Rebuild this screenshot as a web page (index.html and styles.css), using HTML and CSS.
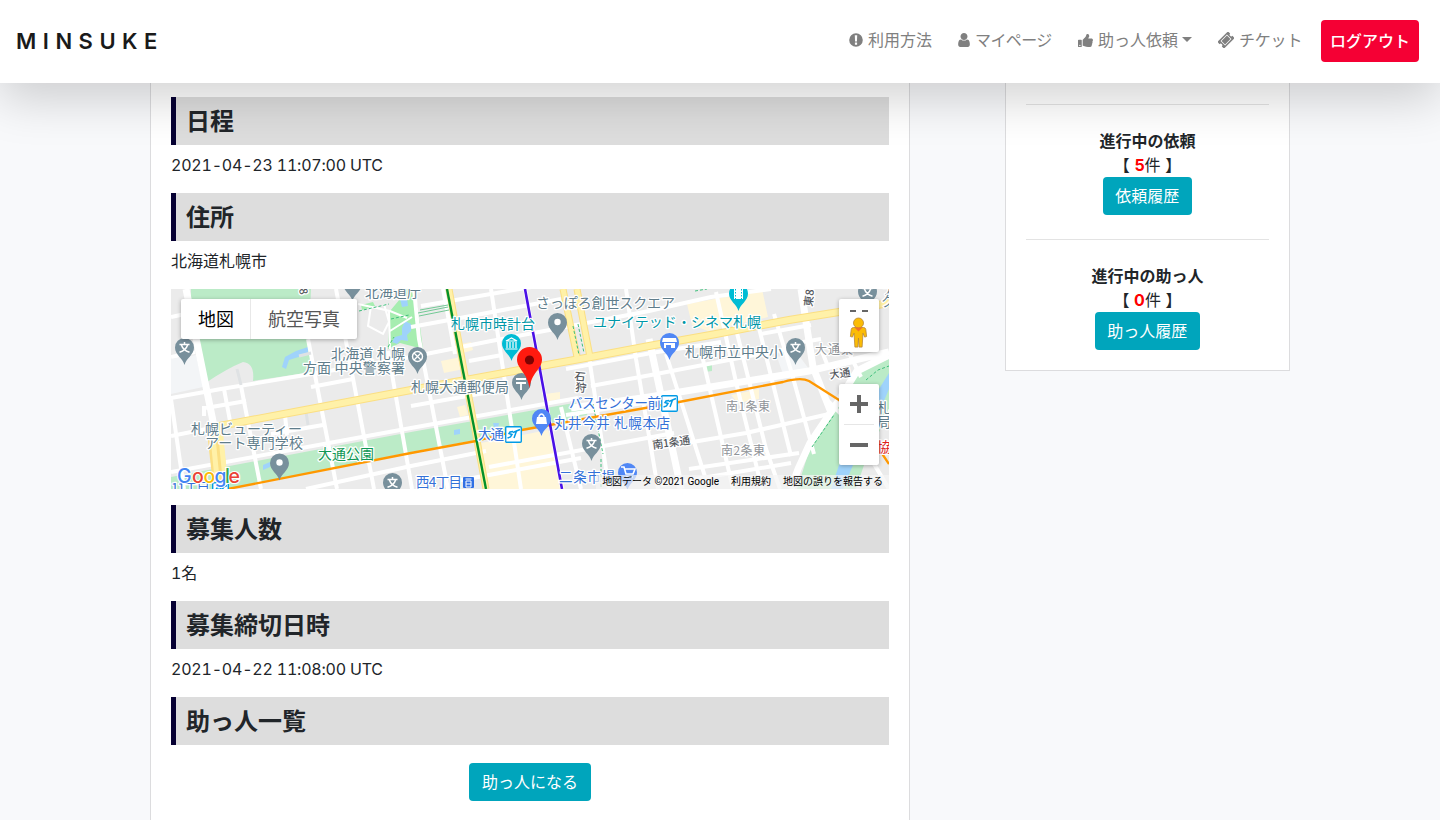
FILE: index.html
```html
<!DOCTYPE html>
<html lang="ja">
<head>
<meta charset="utf-8">
<title>MINSUKE</title>
<link rel="stylesheet" href="styles.css">
</head>
<body>
<header class="navbar">
  <a class="brand">MINSUKE</a>
  <nav class="nav">
    <a class="nav-item"><svg class="i-alert" viewBox="0 0 14 14"><path fill-rule="evenodd" d="M7 .2a6.8 6.8 0 1 0 0 13.600A6.800 6.800 0 0 0 7 .2zM5.800 2.200h2.400l-.25 6.200h-1.900zM5.900 9.600h2.200v2.100H5.900z"/></svg><span class="w64">利用方法</span></a>
    <a class="nav-item"><svg class="i-user" viewBox="256 128 1280 1536"><path d="M1536 1399q0 109-62.5 187t-150.5 78h-854q-88 0-150.5-78t-62.5-187q0-85 8.5-160.5t31.5-152 58.5-131 94-89 134.5-34.5q131 128 313 128t313-128q76 0 134.5 34.5t94 89 58.5 131 31.5 152 8.5 160.5zm-256-887q0 159-112.5 271.5t-271.5 112.5-271.5-112.5-112.5-271.5 112.5-271.5 271.5-112.5 271.5 112.5 112.5 271.5z"/></svg><span class="w77">マイページ</span></a>
    <a class="nav-item"><svg class="i-thumb" viewBox="0 0 512 512" preserveAspectRatio="none"><path d="M104 224H24c-13.255 0-24 10.745-24 24v240c0 13.255 10.745 24 24 24h80c13.255 0 24-10.745 24-24V248c0-13.255-10.745-24-24-24zM64 472c-13.255 0-24-10.745-24-24s10.745-24 24-24 24 10.745 24 24-10.745 24-24 24zM384 81.452c0 42.416-25.97 66.208-33.277 94.548h101.723c33.397 0 59.397 27.746 59.553 58.098.084 17.938-7.546 37.249-19.439 49.197l-.11.11c9.836 23.337 8.237 56.037-9.308 79.469 8.681 25.895-.069 57.704-16.382 74.757 4.298 17.598 2.244 32.575-6.148 44.632C440.202 511.587 389.616 512 346.839 512l-2.845-.001c-48.287-.017-87.806-17.598-119.56-31.725-15.957-7.099-36.821-15.887-52.651-16.178-6.54-.12-11.783-5.457-11.783-11.998v-213.77c0-3.2 1.282-6.271 3.558-8.521 39.614-39.144 56.648-80.587 89.117-113.111 14.804-14.832 20.188-37.236 25.393-58.902C282.515 39.293 291.817 0 312 0c24 0 72 8 72 81.452z"/></svg><span class="w80">助っ人依頼</span><i class="caret"></i></a>
    <a class="nav-item"><svg class="i-ticket" viewBox="0 0 16 16"><g transform="rotate(-45 8 8)"><path fill-rule="evenodd" d="M.5 3.300h15v3.100a1.600 1.600 0 0 0 0 3.200v3.100H.5V9.600a1.600 1.600 0 0 0 0-3.200zM3.500 4.800v6.400h9V4.800z"/><path d="M4.200 5.500h7.600v5H4.200z"/></g></svg><span class="w63">チケット</span></a>
    <a class="logout">ログアウト</a>
  </nav>
</header>
<main class="page">
  <section class="card detail">
    <h2 class="bar">日程</h2>
    <p class="value"><span class="num">2021-04-23 11:07:00 UTC</span></p>
    <h2 class="bar">住所</h2>
    <p class="value">北海道札幌市</p>
    <div class="map">
      <svg class="tiles" viewBox="0 0 718 200">
        <defs>
          <path id="pin" d="M0 0C-1.4-6.5-9.5-10-9.5-17.5a9.5 9.5 0 0 1 19 0C9.5-10 1.4-6.5 0 0z"/>
          <g id="school"><use href="#pin" fill="#78909c"/><g fill="none" stroke="#fff" stroke-width="1.5"><path d="M-5-20.5H5M0-23v2.5M-3.2-20.3C-2-16.5 1-14 5-12.7M3.2-20.3C2-16.5-1-14-5-12.7"/></g></g>
          <g id="place"><use href="#pin" fill="#78909c"/><circle cy="-18" r="3.2" fill="#fff"/></g>
          <g id="st"><rect x=".7" y=".7" width="15.6" height="15.6" rx="1" fill="#fff" stroke="#039be5" stroke-width="1.4"/><path d="M8 5.500 5 6 4 7.500l3 1-1.500 2.500-3 1M8 6.500l7-3M11.500 5l-2.500 7" fill="none" stroke="#039be5" stroke-width="1.5"/></g>
        </defs>
        <rect width="718" height="200" fill="#ebebeb"/>
        <path fill="#f3f5f7" d="M0 70l25-4 7 32-32 7zM606 68l20-4 12 16-26 5z"/>
        <path fill="#bbebc7" d="M20 0h120l-2 45 3 38-59 9q2-18-10-19-15 6-36 20L20 10zM0 188l240-45 163-29 15 3-2 9-111 25-65 12L57 200H0zM533 77l8-2v7l-7 1z"/>
        <path fill="#bbebc7" d="M718 70l-30 12-22 38-26 36-14 44h70l22-80z"/>
        <path fill="#ebebeb" d="M718 120l-12 28-13 28-8 24h33z"/>
        <path fill="#a6edb0" d="M190 16l12-3 2 4-13 4zM219 22l10-12 5-10h10l8 60-23-6-12 6z"/>
        <path fill="#9fd3fb" d="M111 78l3-10 11-6 12-4v7l-19 6-3 9zM234 32l6 3v7l-4 4 1 6-7-1-4 4-5-2 3-5 7-2v-7zM229 10l7-2 1 9-6 1zM92 176l7-3v5l-7 3zM283 141l6-1v5l-6 1zM322 134l6 0-1 5-4-1zM718 84l-10 16-10 42-30 34-8 24h12l10-24 25-50 11-26z"/>
        <path fill="#fff6d9" d="M310 154l67-13 17 59h-76zM516 15l55-10 20-5 6 28-60 14-16-6zM560 106l28-6v10l-21 4zM270 72l20-4 3 12-20 4zM290 55l10-2 2 8-10 3zM374 105l15-2v7l-15 3zM286 118l8-2 3 10-8 2z"/>
        <g fill="none" stroke="#fff" stroke-width="4">
          <path d="M0 28l14-3M0 68l24-5M0 109l50-9 90-15 100-17 80-16 80-15 78-15 62-14 60-8M0 147l40-8M140 98l42-8M35 119l40-7M33 117v10M100 145l52-9M0 183l240-44 167-30" />
          <path d="M250 17l145-25M240 38l60-11 90-17M298 72l33-6M240 117l90-16M318 178l120-22 65-12M280 193l130-24M315 162l-75 15-105 23M395 80l85-16 70-11M420 97l60-11 140-27M480 160l95-16 83-19M518 180l110-16M395 126l90-14M490 196l130-22M590 45l50-9M620 55l30-5"/>
          <path d="M0 110l13 90M53 100l6 32M70 97l20 103M114 126l2 20M137 50l29 150M165 0l38 200M217 62l24 138M243 0l5 50 29 150M272 0l12 65M320 0l30 200M354 0l37 200M390 118l20 82M418 68l20 132M455 0l10 70 22 130M495 65l43 135M530 62l32 138M545 3l20 90 26 107M565 40l30 120 14 40M587 35l33 132M603 25l18 60 22 80M675 58l15 30M650 60l8 20M675 130l-20-20M718 200l-18-30"/>
          <path stroke-width="2" d="M187 15l32 7 17 7M200 17l-3 20 15 8 6-12-5-18M218 22l1 38M219 42l22-14"/>
          <path stroke-width="7" d="M15 0l28 137M478 50l32 150M400 119l78-11 160-26 80-19M630 0l12 78 17 43M620 200l7-20 12-26 27-40 20-32 32-16"/>
        </g>
        <g fill="none" stroke="#dfe2e4" stroke-width="3"><path d="M66 80l4 16M128 67l12-3M135 123l2 13M399 30l10 38"/></g>
        <g fill="none" stroke="#fbdf83" stroke-width="7"><path d="M43 138l107-20 90-17 130-24 50-9 58-11 67-12 73-14 50-8 50-9" stroke-width="8"/><path d="M278 0l37 200M392 0l14 68M406 0l13 68"/><path d="M43 138l7 62" stroke-width="15"/></g>
        <g fill="none" stroke="#fff1a8" stroke-width="5"><path d="M43 138l107-20 90-17 130-24 50-9 58-11 67-12 73-14 50-8 50-9" stroke-width="6"/><path d="M278 0l37 200M392 0l14 68M406 0l13 68"/><path d="M41 138l6 62M49 138l6 62"/></g>
        <path d="M402 37l6 29M407 35l6 29M422 115l10 50M695 91l12-10 11-4M641 158l22-32M430 170v30M188 22l30-7M217 58l6-10M220 30l18-4M524 2l12-2" fill="none" stroke="#3fc07c" stroke-dasharray="3 2"/>
        <path d="M247 24l30-6M248 27l30-6M249 21l28-5" fill="none" stroke="#73c996"/>
        <g fill="none" stroke-linejoin="round"><path d="M57 200l183-36 65-12 40-10 135-24 28-5 104-20q18-5 26-1l30 19 32 37 18 27" stroke="#ff9800" stroke-width="2.3"/><path d="M276 0l39 200" stroke="#039029" stroke-width="2.4"/><path d="M354 0l37 200" stroke="#4a10e6" stroke-width="2.6"/></g>
        <use href="#school" x="13.500" y="76"/><use href="#place" x="181.500" y="12"/><use href="#place" x="108.500" y="191.500"/><use href="#school" x="221.500" y="211"/>
        <use href="#pin" x="246.500" y="85" fill="#78909c"/><circle cx="246.500" cy="67.500" r="5" fill="none" stroke="#fff" stroke-width="1.400"/><path d="M243 64l7 7M250 64l-7 7" stroke="#fff" stroke-width="1.300"/>
        <use href="#place" x="386.500" y="51"/><use href="#school" x="420.500" y="172"/><use href="#school" x="624.500" y="76"/><use href="#school" x="696.500" y="20"/>
        <use href="#pin" x="340.500" y="72" fill="#00bcd4"/><path d="M335 52l5.500-3 5.500 3zM336 53v6M339 53v6M342 53v6M345 53v6M334.500 60h12" fill="none" stroke="#fff" stroke-width="1.200"/>
        <use href="#pin" x="567.500" y="22" fill="#00bcd4"/><path d="M563 0h9v10h-9z" fill="#fff"/><path d="M564.500 0v10M570.500 0v10" stroke="#00bcd4" stroke-dasharray="1.500 1.500"/>
        <use href="#pin" x="498.500" y="71" fill="#5087f5"/><path d="M492 49h13l1 4h-15zM493 54h11v5h-4v-3h-5v3h-2z" fill="#fff"/>
        <use href="#pin" x="350.500" y="111" fill="#78909c"/><path d="M345 90h10M345 94h10M350 94v7" stroke="#fff" stroke-width="1.800"/>
        <use href="#pin" x="370.500" y="147" fill="#5087f5"/><path d="M366 128h9l1 7h-11z" fill="#fff"/><path d="M368 129v-2q2.500-4 5 0v2" fill="none" stroke="#fff" stroke-width="1.400"/>
        <use href="#pin" x="456.500" y="201" fill="#5087f5"/><path d="M450 178h3l2 7h7l2-5h-10" fill="none" stroke="#fff" stroke-width="1.600"/><circle cx="456" cy="188" r="1" fill="#fff"/><circle cx="461" cy="188" r="1" fill="#fff"/>
        <path d="M358.500 99.500C357 84 346 80 346 70.500a12.500 12.500 0 0 1 25 0c0 9.500-11 13.500-12.500 29z" fill="#ff1a0f"/><circle cx="358.500" cy="71" r="4.600" fill="#7d0303"/>
        <use href="#st" x="334" y="137"/><use href="#st" x="490" y="106"/><use href="#st" x="41" y="193"/>
        <rect x="292" y="188" width="11" height="11" rx="1" fill="#2f6fe4"/><path d="M294.500 190h6M295 192h5v6h-5zM295 195h5" fill="none" stroke="#fff"/>
        <g class="lbl slate">
          <text x="194" y="8" textLength="56">北海道庁</text><text x="160" y="70" textLength="74">北海道 札幌</text><text x="132" y="84" textLength="102">方面 中央警察署</text>
          <text x="20" y="145" textLength="111">札幌ビューティー</text><text x="34" y="159" textLength="98">アート専門学校</text><text x="240" y="103" textLength="98">札幌大通郵便局</text>
          <text x="365" y="19" textLength="139">さっぽろ創世スクエア</text><text x="514" y="68" textLength="98">札幌市立中央小</text><text x="711" y="5">ナ</text><text x="710" y="17">ク</text><text x="706" y="124">札</text><text x="706" y="138">局</text>
        </g>
        <g class="lbl teal"><text x="280" y="40" textLength="84">札幌市時計台</text><text x="422" y="38" textLength="168">ユナイテッド・シネマ札幌</text></g>
        <text class="lbl green" x="147" y="170" textLength="56">大通公園</text>
        <g class="lbl blue"><text x="0" y="204" textLength="39">11丁目</text><text x="245" y="198" textLength="46">西4丁目</text><text x="307" y="150" textLength="26">大通</text><text x="398" y="119" textLength="92">バスセンター前</text><text x="383" y="139" textLength="116">丸井今井 札幌本店</text><text x="388" y="193" textLength="56">二条市場</text></g>
        <text class="lbl red" x="706" y="163">協</text>
        <g class="lbl area"><text x="644" y="65" textLength="38">大通東</text><text x="555" y="122" textLength="44">南1条東</text><text x="550" y="166" textLength="44">南2条東</text></g>
        <g class="lbl street"><text transform="translate(482 160) rotate(-8)" textLength="38">南1条通</text><text transform="translate(659 90) rotate(-8)" textLength="21">大通</text><text transform="translate(403 91) rotate(7)">石</text><text transform="translate(404 102) rotate(7)">狩</text><text transform="translate(641 18) rotate(-83)">東8</text><text transform="translate(128 0) rotate(80)">8</text></g>
        <g class="google"><text x="6" y="193.500" fill="#4285f4">G</text><text x="21" y="193.500" fill="#ea4335">o</text><text x="32.500" y="193.500" fill="#fbbc05">o</text><text x="43.500" y="193.500" fill="#4285f4">g</text><text x="54" y="193.500" fill="#34a853">l</text><text x="57.500" y="193.500" fill="#ea4335">e</text></g>
      </svg>
      <div class="map-type"><span class="type on">地図</span><span class="type">航空写真</span></div>
      <div class="map-side">
        <div class="pegman"><svg viewBox="0 0 40 53"><path d="M11 12h6M23 12h6" stroke="#666" stroke-width="2"/><g fill="#fbbc05" stroke="#b6873a" stroke-width=".8"><path d="M14.500 28.500h10q2 0 2.300 2l.8 7-2 .6-1.600-4-.9 14h-3l-.6-9-.6 9h-3l-.9-14-1.600 4-2-.6.8-7q.3-2 2.300-2z"/><circle cx="19.500" cy="24" r="5"/></g><path d="M15.500 28.500h8l-4 4z" fill="#f0712c"/></svg></div>
        <div class="zoom"><svg viewBox="0 0 40 81"><path d="M11 20h18M20 11v18M11 61h18" stroke="#666" stroke-width="4"/><path d="M5 40.500h30" stroke="#e6e6e6"/></svg></div>
      </div>
      <div class="credits"><span class="c-data">地図データ ©2021 Google</span><span class="c-terms">利用規約</span><span>地図の誤りを報告する</span></div>
    </div>
    <h2 class="bar">募集人数</h2>
    <p class="value"><span class="num">1</span>名</p>
    <h2 class="bar">募集締切日時</h2>
    <p class="value"><span class="num">2021-04-22 11:08:00 UTC</span></p>
    <h2 class="bar last">助っ人一覧</h2>
    <div class="center"><a class="btn">助っ人になる</a></div>
  </section>
  <aside class="card side">
    <div class="group"><b>進行中の依頼</b><p class="count">【 <strong>5</strong>件 】</p><a class="btn">依頼履歴</a></div>
    <div class="group"><b>進行中の助っ人</b><p class="count">【 <strong>0</strong>件 】</p><a class="btn">助っ人履歴</a></div>
  </aside>
</main>
</body>
</html>
```

FILE: styles.css
```css
* { box-sizing: border-box; }
html, body { height: 100%; overflow: hidden; }
body { margin: 0; background: #f8f9fb; color: #212529; font: 16px/24px "Noto Sans CJK JP", sans-serif; }
p, h2 { margin: 0; }
.navbar { position: relative; z-index: 2; display: flex; justify-content: space-between; align-items: center; height: 83px; padding: 0 21px 1px 16px; background: #fff; box-shadow: 0 16px 48px rgba(0, 0, 0, .175); }
.brand { font: 600 22px/30px Inter, sans-serif; letter-spacing: 6.5px; color: #1a1a1a; white-space: nowrap; }
.nav { display: flex; align-items: center; gap: 26px; color: #808080; }
.nav-item { display: flex; align-items: center; height: 24px; margin-top: -4px; white-space: nowrap; }
.nav-item svg { fill: #808080; flex: none; position: relative; top: 1px; }
.nav-item span { display: block; }
.i-alert { width: 14px; height: 14px; margin-right: 5px; }
.i-user { width: 12px; height: 14px; margin-right: 5px; }
.i-thumb { width: 15px; height: 13px; margin-right: 5px; }
.i-ticket { width: 16px; height: 16px; margin-right: 5px; }
.w64 { width: 64px; }
.w77 { width: 77px; letter-spacing: -.6px; }
.w80 { width: 80px; }
.w63 { width: 63px; letter-spacing: -.2px; }
.caret { margin: 0 0 0 4px; border: 5px solid transparent; border-top-color: #808080; border-bottom: 0; }
.logout { width: 98px; height: 42px; margin-left: -7px; border-radius: 4px; background: #f50034; color: #fff; font-weight: 500; line-height: 41px; text-align: center; white-space: nowrap; }
.page { display: flex; align-items: flex-start; justify-content: space-between; width: 1140px; margin: 0 auto; }
.card { background: #fff; border: 1px solid #dcdcde; border-top: 0; }
.detail { width: 760px; height: 760px; padding: 14px 20px 0; }
.bar { height: 48px; border-left: 5px solid #060033; background: #ddd; padding-left: 10px; font-size: 24px; line-height: 45px; font-weight: 700; }
.value { height: 48px; padding-top: 7px; }
.num { font-family: Inter, sans-serif; font-weight: 400; font-feature-settings: "tnum"; letter-spacing: -.21px; }
.map { position: relative; height: 200px; margin-bottom: 16px; overflow: hidden; }
.tiles { display: block; width: 718px; height: 200px; }
.lbl { font: 14px "Noto Sans CJK JP", sans-serif; stroke: #fff; stroke-width: 2.5px; stroke-linejoin: round; paint-order: stroke; }
.slate { fill: #607d8b; }
.teal { fill: #0097a7; }
.green { fill: #109855; }
.blue { fill: #3471d8; font-size: 13.5px; }
.red { fill: #e02020; }
.area { fill: #909499; font-size: 12px; }
.street { fill: #55595e; font-size: 11px; font-weight: 500; }
.google { font: 500 19.5px Inter, sans-serif; stroke: #fff; stroke-width: 2px; paint-order: stroke; }
.map-type { position: absolute; left: 10px; top: 10px; display: flex; height: 40px; background: #fff; border-radius: 2px; box-shadow: 0 1px 4px rgba(0, 0, 0, .3); font-size: 18px; line-height: 39px; }
.type { padding: 0 17px; color: #565656; }
.type.on { padding-right: 16px; border-right: 1px solid #e8e8e8; color: #000; }
.map-side { position: absolute; right: 10px; top: 10px; display: grid; gap: 32px; width: 40px; }
.pegman, .zoom { background: #fff; border-radius: 2px; box-shadow: 0 1px 4px rgba(0, 0, 0, .3); }
.pegman { height: 53px; }
.zoom { height: 81px; }
.map-side svg { display: block; width: 40px; }
.credits { position: absolute; right: 0; bottom: 0; display: flex; height: 14px; padding: 0 6px; background: rgba(245, 245, 245, .7); color: #000; font: 10px/14px Roboto, "Noto Sans CJK JP", sans-serif; white-space: nowrap; }
.c-data { margin-right: 12px; }
.c-terms { margin-right: 12px; }
.last { margin-bottom: 18px; }
.center { text-align: center; padding-left: 0; }
.btn { display: inline-block; height: 38px; padding: 0 13px; border-radius: 4px; background: #00a5bc; color: #fff; font-weight: 400; line-height: 37px; vertical-align: top; }
.side { width: 285px; height: 288px; padding: 21px 20px 0; text-align: center; }
.group { height: 135px; padding-top: 24px; border-top: 1px solid #e3e3e3; }
.group b { display: block; height: 24px; line-height: 22px; }
.group .btn { padding: 0 13px 0 12.5px; }
.count { height: 24px; line-height: 22px; white-space: nowrap; word-spacing: 1px; }
.count strong { color: #f00; font-family: Inter, sans-serif; font-weight: 700; }
```
